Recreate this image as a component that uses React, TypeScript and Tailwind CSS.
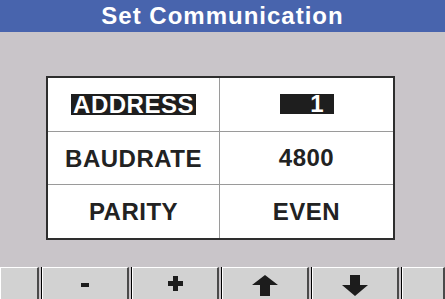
import React from 'react';

const rows = [
  { label: 'ADDRESS', value: '1', selected: true },
  { label: 'BAUDRATE', value: '4800', selected: false },
  { label: 'PARITY', value: 'EVEN', selected: false }
];

const UpArrow = () => (
  <svg width="26" height="21" viewBox="0 0 26 21">
    <path d="M13 0 L26 10 L18 10 L18 21 L8 21 L8 10 L0 10 Z" fill="#1c1c1c" />
  </svg>
);

const DownArrow = () => (
  <svg width="26" height="21" viewBox="0 0 26 21">
    <path d="M8 0 L18 0 L18 10 L26 10 L13 21 L0 10 L8 10 Z" fill="#1c1c1c" />
  </svg>
);

const SoftKey: React.FC<{ className: string; children?: React.ReactNode }> = ({
  className,
  children
}) => (
  <div className={`h-full border-l border-black ${className}`}>
    <div className="h-full flex items-center justify-center bg-[#d2d2d2] border-t border-l border-white border-r-2 border-r-[#4a4a4a]">
      {children}
    </div>
  </div>
);

export default function App() {
  return (
    <div
      className="w-[445px] h-[299px] overflow-hidden bg-[#c9c5c9] flex flex-col"
      style={{ fontFamily: '"Liberation Sans", Arial, sans-serif' }}
    >
      <div className="h-[32px] bg-[#4864ad] flex items-center justify-center">
        <span className="text-white font-bold text-[24px] leading-none tracking-[1px]">
          Set Communication
        </span>
      </div>

      <div className="mt-[44px] ml-[46px] w-[349px] h-[164px] border-2 border-[#2e2e2e] bg-white flex flex-col">
        {rows.map((r, i) => (
          <div
            key={r.label}
            className={`flex flex-1 ${i > 0 ? 'border-t border-[#9a9a9a]' : ''}`}
          >
            <div className="w-[172px] border-r border-[#9a9a9a] flex items-center justify-center">
              <span
                className={`font-bold text-[24px] leading-[21px] tracking-[0.5px] px-[2px] ${
                  r.selected ? 'bg-[#1e1e1e] text-white' : 'text-[#222]'
                }`}
              >
                {r.label}
              </span>
            </div>
            <div className="flex-1 flex items-center justify-center">
              {r.selected ? (
                <span className="w-[54px] h-[20px] bg-[#1e1e1e] text-white font-bold text-[24px] leading-[20px] text-right pr-[10px]">
                  {r.value}
                </span>
              ) : (
                <span className="font-bold text-[24px] leading-none tracking-[0.5px] text-[#222]">
                  {r.value}
                </span>
              )}
            </div>
          </div>
        ))}
      </div>

      <div className="mt-[27px] h-[32px] flex gap-[2px]">
        <SoftKey className="w-[39px] border-l-0" />
        <SoftKey className="w-[88px]">
          <div className="w-[8px] h-[4px] bg-[#1c1c1c] mt-[2px]" />
        </SoftKey>
        <SoftKey className="w-[88px]">
          <div className="relative w-[15px] h-[15px]">
            <div className="absolute left-0 top-[5px] w-[15px] h-[5px] bg-[#1c1c1c]" />
            <div className="absolute top-0 left-[5px] w-[5px] h-[15px] bg-[#1c1c1c]" />
          </div>
        </SoftKey>
        <SoftKey className="w-[88px]">
          <div className="mt-[4px]">
            <UpArrow />
          </div>
        </SoftKey>
        <SoftKey className="w-[88px]">
          <div className="mt-[4px]">
            <DownArrow />
          </div>
        </SoftKey>
        <SoftKey className="flex-1" />
      </div>
    </div>
  );
}
